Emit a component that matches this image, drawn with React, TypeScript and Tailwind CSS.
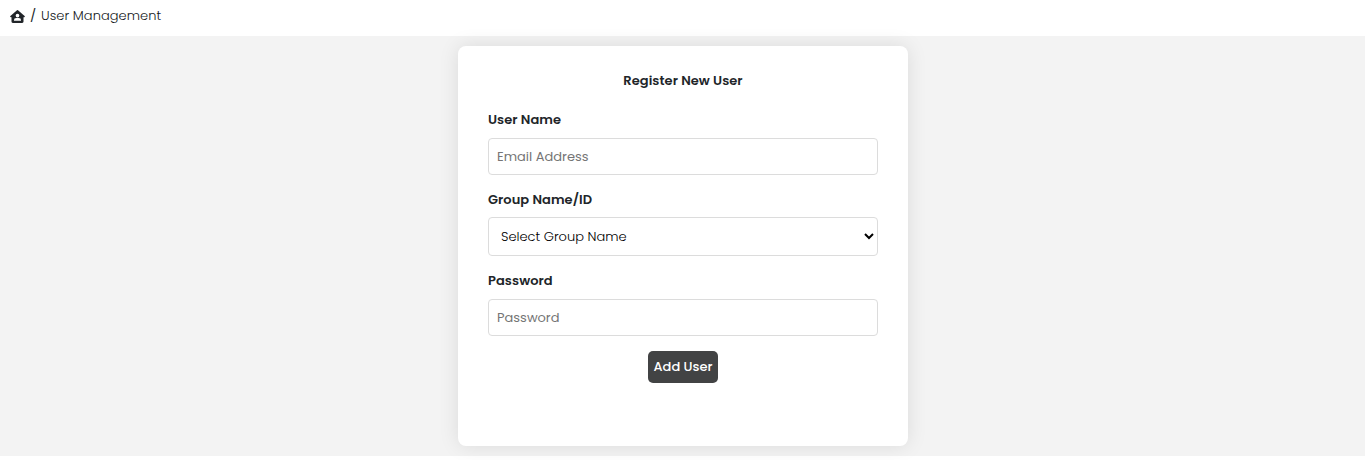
function HomeUserIcon({ className }: { className: string }) {
  return (
    <svg viewBox="0 0 15 13" className={className} fill="currentColor">
      <path
        fillRule="evenodd"
        d="M7 .25a.8.8 0 0 1 1 0l6.6 5.7c.55.5.2 1.3-.5 1.3h-.6v4.25c0 .85-.5 1.4-1.35 1.4H2.85c-.85 0-1.35-.55-1.35-1.4V7.25H.9c-.7 0-1.05-.8-.5-1.3ZM7.5 3.7a1.85 1.85 0 1 0 0 3.7A1.85 1.85 0 0 0 7.5 3.7ZM6.3 8A2.4 2.4 0 0 0 3.9 10.4c0 .25.2.45.45.45h6.3c.25 0 .45-.2.45-.45A2.4 2.4 0 0 0 8.7 8Z"
      />
    </svg>
  );
}

function Label({ text, className }: { text: string; className: string }) {
  return (
    <label className={`block text-[13px] leading-5 font-semibold tracking-[0.06px] whitespace-nowrap ${className}`}>
      {text}
    </label>
  );
}

const field =
  'block w-full rounded border border-[#dcdcdc] bg-white text-[13px] outline-none placeholder:text-[#757575]';

export default function App() {
  return (
    <div className="h-[460px] overflow-hidden bg-white font-['Poppins','Inter',sans-serif] text-[13px] text-[#212529]">
      <header className="flex h-9 items-start bg-white pt-[5px] pl-[10px] leading-[21px]">
        <HomeUserIcon className="mt-[5px] h-[13px] w-[15px]" />
        <span className="ml-[5px] w-[5px]">/</span>
        <span className="ml-[6px] font-light tracking-[0.05px] text-[#15191c]">User Management</span>
      </header>
      <main className="flex h-[420px] justify-center bg-[#f3f3f3] pt-[10px] pl-px">
        <form className="h-[400px] w-[450px] rounded-lg bg-white px-[30px] pt-[25px] shadow-[0_0_20px_rgba(0,0,0,0.1)]">
          <h1 className="text-center text-[13px] leading-5 font-semibold tracking-[0.06px]">Register New User</h1>
          <Label text="User Name" className="mt-[19px]" />
          <input placeholder="Email Address" className={`${field} mt-2 h-[37px] px-2`} />
          <Label text="Group Name/ID" className="mt-[15px]" />
          <select className={`${field} mt-[7px] h-[39px] px-2 font-light text-black`}>
            <option>Select Group Name</option>
          </select>
          <Label text="Password" className="mt-[15px]" />
          <input type="password" placeholder="Password" className={`${field} mt-2 h-[37px] px-2`} />
          <button type="button" className="mx-auto mt-[15px] block h-8 w-[70px] rounded-[5px] bg-[#424344] text-[13px] font-medium whitespace-nowrap text-white">
            Add User
          </button>
        </form>
      </main>
    </div>
  );
}
